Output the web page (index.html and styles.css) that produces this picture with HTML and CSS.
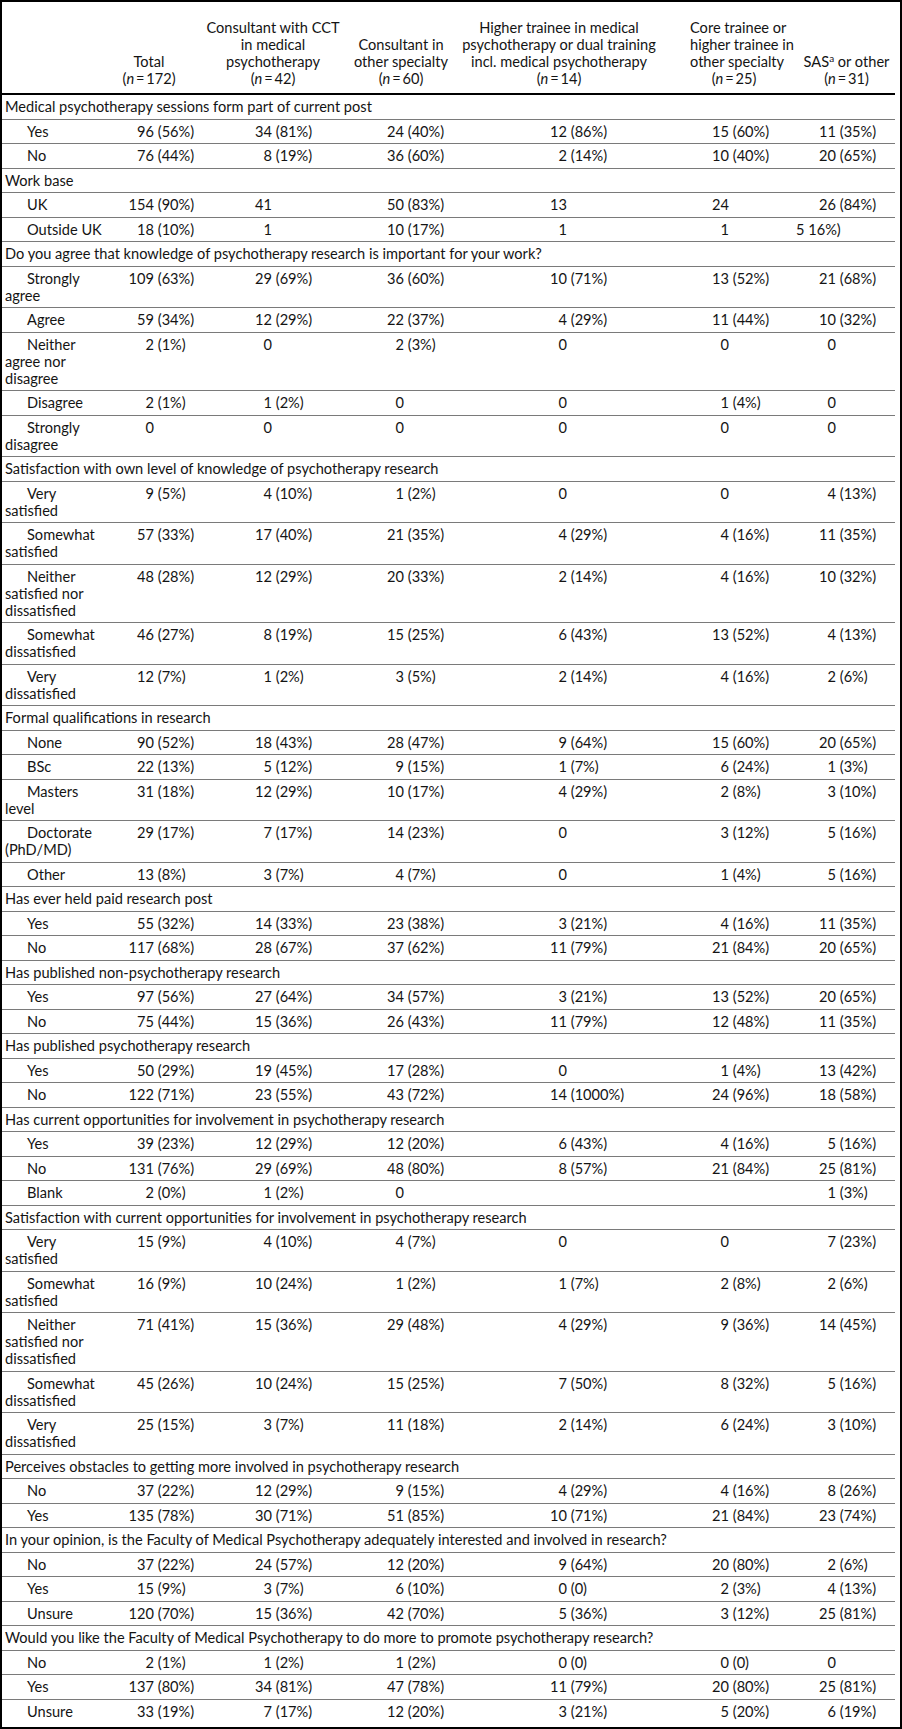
FILE: index.html
```html
<!DOCTYPE html>
<html lang="en">
<head>
<meta charset="utf-8">
<title>Survey table</title>
<link rel="stylesheet" href="styles.css">
</head>
<body>
<div class="frame">
<table class="tbl">
<colgroup>
<col class="w0"><col class="w1"><col class="w2"><col class="w3"><col class="w4"><col class="w5"><col class="w6">
</colgroup>
<thead>
<tr>
<th></th>
<th>Total<br>(<i>n</i>&thinsp;=&thinsp;172)</th>
<th>Consultant with CCT<br>in medical<br>psychotherapy<br>(<i>n</i>&thinsp;=&thinsp;42)</th>
<th>Consultant in<br>other specialty<br>(<i>n</i>&thinsp;=&thinsp;60)</th>
<th>Higher trainee in medical<br>psychotherapy or dual training<br>incl. medical psychotherapy<br>(<i>n</i>&thinsp;=&thinsp;14)</th>
<th>Core trainee or<br>higher trainee in<br>other specialty<br>(<i>n</i>&thinsp;=&thinsp;25)</th>
<th>SAS<sup>a</sup> or other<br>(<i>n</i>&thinsp;=&thinsp;31)</th>
</tr>
</thead>
<tbody>
<tr><td class="s" colspan="7">Medical psychotherapy sessions form part of current post</td></tr>
<tr><td class="l">Yes</td><td><span class="c">96</span> (56%)</td><td><span class="c">34</span> (81%)</td><td><span class="c">24</span> (40%)</td><td><span class="c">12</span> (86%)</td><td><span class="c">15</span> (60%)</td><td><span class="c">11</span> (35%)</td></tr>
<tr><td class="l">No</td><td><span class="c">76</span> (44%)</td><td><span class="c">8</span> (19%)</td><td><span class="c">36</span> (60%)</td><td><span class="c">2</span> (14%)</td><td><span class="c">10</span> (40%)</td><td><span class="c">20</span> (65%)</td></tr>

<tr><td class="s" colspan="7">Work base</td></tr>
<tr><td class="l">UK</td><td><span class="c">154</span> (90%)</td><td><span class="c">41</span></td><td><span class="c">50</span> (83%)</td><td><span class="c">13</span></td><td><span class="c">24</span></td><td><span class="c">26</span> (84%)</td></tr>
<tr><td class="l">Outside UK</td><td><span class="c">18</span> (10%)</td><td><span class="c">1</span></td><td><span class="c">10</span> (17%)</td><td><span class="c">1</span></td><td><span class="c">1</span></td><td class="odd">5 16%)</td></tr>

<tr><td class="s" colspan="7">Do you agree that knowledge of psychotherapy research is important for your work?</td></tr>
<tr><td class="l">Strongly<br>agree</td><td><span class="c">109</span> (63%)</td><td><span class="c">29</span> (69%)</td><td><span class="c">36</span> (60%)</td><td><span class="c">10</span> (71%)</td><td><span class="c">13</span> (52%)</td><td><span class="c">21</span> (68%)</td></tr>
<tr><td class="l">Agree</td><td><span class="c">59</span> (34%)</td><td><span class="c">12</span> (29%)</td><td><span class="c">22</span> (37%)</td><td><span class="c">4</span> (29%)</td><td><span class="c">11</span> (44%)</td><td><span class="c">10</span> (32%)</td></tr>
<tr><td class="l">Neither<br>agree nor<br>disagree</td><td><span class="c">2</span> (1%)</td><td><span class="c">0</span></td><td><span class="c">2</span> (3%)</td><td><span class="c">0</span></td><td><span class="c">0</span></td><td><span class="c">0</span></td></tr>
<tr><td class="l">Disagree</td><td><span class="c">2</span> (1%)</td><td><span class="c">1</span> (2%)</td><td><span class="c">0</span></td><td><span class="c">0</span></td><td><span class="c">1</span> (4%)</td><td><span class="c">0</span></td></tr>
<tr><td class="l">Strongly<br>disagree</td><td><span class="c">0</span></td><td><span class="c">0</span></td><td><span class="c">0</span></td><td><span class="c">0</span></td><td><span class="c">0</span></td><td><span class="c">0</span></td></tr>

<tr><td class="s" colspan="7">Satisfaction with own level of knowledge of psychotherapy research</td></tr>
<tr><td class="l">Very<br>satisfied</td><td><span class="c">9</span> (5%)</td><td><span class="c">4</span> (10%)</td><td><span class="c">1</span> (2%)</td><td><span class="c">0</span></td><td><span class="c">0</span></td><td><span class="c">4</span> (13%)</td></tr>
<tr><td class="l">Somewhat<br>satisfied</td><td><span class="c">57</span> (33%)</td><td><span class="c">17</span> (40%)</td><td><span class="c">21</span> (35%)</td><td><span class="c">4</span> (29%)</td><td><span class="c">4</span> (16%)</td><td><span class="c">11</span> (35%)</td></tr>
<tr><td class="l">Neither<br>satisfied nor<br>dissatisfied</td><td><span class="c">48</span> (28%)</td><td><span class="c">12</span> (29%)</td><td><span class="c">20</span> (33%)</td><td><span class="c">2</span> (14%)</td><td><span class="c">4</span> (16%)</td><td><span class="c">10</span> (32%)</td></tr>
<tr><td class="l">Somewhat<br>dissatisfied</td><td><span class="c">46</span> (27%)</td><td><span class="c">8</span> (19%)</td><td><span class="c">15</span> (25%)</td><td><span class="c">6</span> (43%)</td><td><span class="c">13</span> (52%)</td><td><span class="c">4</span> (13%)</td></tr>
<tr><td class="l">Very<br>dissatisfied</td><td><span class="c">12</span> (7%)</td><td><span class="c">1</span> (2%)</td><td><span class="c">3</span> (5%)</td><td><span class="c">2</span> (14%)</td><td><span class="c">4</span> (16%)</td><td><span class="c">2</span> (6%)</td></tr>

<tr><td class="s" colspan="7">Formal qualifications in research</td></tr>
<tr><td class="l">None</td><td><span class="c">90</span> (52%)</td><td><span class="c">18</span> (43%)</td><td><span class="c">28</span> (47%)</td><td><span class="c">9</span> (64%)</td><td><span class="c">15</span> (60%)</td><td><span class="c">20</span> (65%)</td></tr>
<tr><td class="l">BSc</td><td><span class="c">22</span> (13%)</td><td><span class="c">5</span> (12%)</td><td><span class="c">9</span> (15%)</td><td><span class="c">1</span> (7%)</td><td><span class="c">6</span> (24%)</td><td><span class="c">1</span> (3%)</td></tr>
<tr><td class="l">Masters<br>level</td><td><span class="c">31</span> (18%)</td><td><span class="c">12</span> (29%)</td><td><span class="c">10</span> (17%)</td><td><span class="c">4</span> (29%)</td><td><span class="c">2</span> (8%)</td><td><span class="c">3</span> (10%)</td></tr>
<tr><td class="l">Doctorate<br>(PhD/MD)</td><td><span class="c">29</span> (17%)</td><td><span class="c">7</span> (17%)</td><td><span class="c">14</span> (23%)</td><td><span class="c">0</span></td><td><span class="c">3</span> (12%)</td><td><span class="c">5</span> (16%)</td></tr>
<tr><td class="l">Other</td><td><span class="c">13</span> (8%)</td><td><span class="c">3</span> (7%)</td><td><span class="c">4</span> (7%)</td><td><span class="c">0</span></td><td><span class="c">1</span> (4%)</td><td><span class="c">5</span> (16%)</td></tr>

<tr><td class="s" colspan="7">Has ever held paid research post</td></tr>
<tr><td class="l">Yes</td><td><span class="c">55</span> (32%)</td><td><span class="c">14</span> (33%)</td><td><span class="c">23</span> (38%)</td><td><span class="c">3</span> (21%)</td><td><span class="c">4</span> (16%)</td><td><span class="c">11</span> (35%)</td></tr>
<tr><td class="l">No</td><td><span class="c">117</span> (68%)</td><td><span class="c">28</span> (67%)</td><td><span class="c">37</span> (62%)</td><td><span class="c">11</span> (79%)</td><td><span class="c">21</span> (84%)</td><td><span class="c">20</span> (65%)</td></tr>

<tr><td class="s" colspan="7">Has published non-psychotherapy research</td></tr>
<tr><td class="l">Yes</td><td><span class="c">97</span> (56%)</td><td><span class="c">27</span> (64%)</td><td><span class="c">34</span> (57%)</td><td><span class="c">3</span> (21%)</td><td><span class="c">13</span> (52%)</td><td><span class="c">20</span> (65%)</td></tr>
<tr><td class="l">No</td><td><span class="c">75</span> (44%)</td><td><span class="c">15</span> (36%)</td><td><span class="c">26</span> (43%)</td><td><span class="c">11</span> (79%)</td><td><span class="c">12</span> (48%)</td><td><span class="c">11</span> (35%)</td></tr>

<tr><td class="s" colspan="7">Has published psychotherapy research</td></tr>
<tr><td class="l">Yes</td><td><span class="c">50</span> (29%)</td><td><span class="c">19</span> (45%)</td><td><span class="c">17</span> (28%)</td><td><span class="c">0</span></td><td><span class="c">1</span> (4%)</td><td><span class="c">13</span> (42%)</td></tr>
<tr><td class="l">No</td><td><span class="c">122</span> (71%)</td><td><span class="c">23</span> (55%)</td><td><span class="c">43</span> (72%)</td><td><span class="c">14</span> (1000%)</td><td><span class="c">24</span> (96%)</td><td><span class="c">18</span> (58%)</td></tr>

<tr><td class="s" colspan="7">Has current opportunities for involvement in psychotherapy research</td></tr>
<tr><td class="l">Yes</td><td><span class="c">39</span> (23%)</td><td><span class="c">12</span> (29%)</td><td><span class="c">12</span> (20%)</td><td><span class="c">6</span> (43%)</td><td><span class="c">4</span> (16%)</td><td><span class="c">5</span> (16%)</td></tr>
<tr><td class="l">No</td><td><span class="c">131</span> (76%)</td><td><span class="c">29</span> (69%)</td><td><span class="c">48</span> (80%)</td><td><span class="c">8</span> (57%)</td><td><span class="c">21</span> (84%)</td><td><span class="c">25</span> (81%)</td></tr>
<tr><td class="l">Blank</td><td><span class="c">2</span> (0%)</td><td><span class="c">1</span> (2%)</td><td><span class="c">0</span></td><td></td><td></td><td><span class="c">1</span> (3%)</td></tr>

<tr><td class="s" colspan="7">Satisfaction with current opportunities for involvement in psychotherapy research</td></tr>
<tr><td class="l">Very<br>satisfied</td><td><span class="c">15</span> (9%)</td><td><span class="c">4</span> (10%)</td><td><span class="c">4</span> (7%)</td><td><span class="c">0</span></td><td><span class="c">0</span></td><td><span class="c">7</span> (23%)</td></tr>
<tr><td class="l">Somewhat<br>satisfied</td><td><span class="c">16</span> (9%)</td><td><span class="c">10</span> (24%)</td><td><span class="c">1</span> (2%)</td><td><span class="c">1</span> (7%)</td><td><span class="c">2</span> (8%)</td><td><span class="c">2</span> (6%)</td></tr>
<tr><td class="l">Neither<br>satisfied nor<br>dissatisfied</td><td><span class="c">71</span> (41%)</td><td><span class="c">15</span> (36%)</td><td><span class="c">29</span> (48%)</td><td><span class="c">4</span> (29%)</td><td><span class="c">9</span> (36%)</td><td><span class="c">14</span> (45%)</td></tr>
<tr><td class="l">Somewhat<br>dissatisfied</td><td><span class="c">45</span> (26%)</td><td><span class="c">10</span> (24%)</td><td><span class="c">15</span> (25%)</td><td><span class="c">7</span> (50%)</td><td><span class="c">8</span> (32%)</td><td><span class="c">5</span> (16%)</td></tr>
<tr><td class="l">Very<br>dissatisfied</td><td><span class="c">25</span> (15%)</td><td><span class="c">3</span> (7%)</td><td><span class="c">11</span> (18%)</td><td><span class="c">2</span> (14%)</td><td><span class="c">6</span> (24%)</td><td><span class="c">3</span> (10%)</td></tr>

<tr><td class="s" colspan="7">Perceives obstacles to getting more involved in psychotherapy research</td></tr>
<tr><td class="l">No</td><td><span class="c">37</span> (22%)</td><td><span class="c">12</span> (29%)</td><td><span class="c">9</span> (15%)</td><td><span class="c">4</span> (29%)</td><td><span class="c">4</span> (16%)</td><td><span class="c">8</span> (26%)</td></tr>
<tr><td class="l">Yes</td><td><span class="c">135</span> (78%)</td><td><span class="c">30</span> (71%)</td><td><span class="c">51</span> (85%)</td><td><span class="c">10</span> (71%)</td><td><span class="c">21</span> (84%)</td><td><span class="c">23</span> (74%)</td></tr>

<tr><td class="s" colspan="7">In your opinion, is the Faculty of Medical Psychotherapy adequately interested and involved in research?</td></tr>
<tr><td class="l">No</td><td><span class="c">37</span> (22%)</td><td><span class="c">24</span> (57%)</td><td><span class="c">12</span> (20%)</td><td><span class="c">9</span> (64%)</td><td><span class="c">20</span> (80%)</td><td><span class="c">2</span> (6%)</td></tr>
<tr><td class="l">Yes</td><td><span class="c">15</span> (9%)</td><td><span class="c">3</span> (7%)</td><td><span class="c">6</span> (10%)</td><td><span class="c">0</span> (0)</td><td><span class="c">2</span> (3%)</td><td><span class="c">4</span> (13%)</td></tr>
<tr><td class="l">Unsure</td><td><span class="c">120</span> (70%)</td><td><span class="c">15</span> (36%)</td><td><span class="c">42</span> (70%)</td><td><span class="c">5</span> (36%)</td><td><span class="c">3</span> (12%)</td><td><span class="c">25</span> (81%)</td></tr>

<tr><td class="s" colspan="7">Would you like the Faculty of Medical Psychotherapy to do more to promote psychotherapy research?</td></tr>
<tr><td class="l">No</td><td><span class="c">2</span> (1%)</td><td><span class="c">1</span> (2%)</td><td><span class="c">1</span> (2%)</td><td><span class="c">0</span> (0)</td><td><span class="c">0</span> (0)</td><td><span class="c">0</span></td></tr>
<tr><td class="l">Yes</td><td><span class="c">137</span> (80%)</td><td><span class="c">34</span> (81%)</td><td><span class="c">47</span> (78%)</td><td><span class="c">11</span> (79%)</td><td><span class="c">20</span> (80%)</td><td><span class="c">25</span> (81%)</td></tr>
<tr class="last"><td class="l">Unsure</td><td><span class="c">33</span> (19%)</td><td><span class="c">7</span> (17%)</td><td><span class="c">12</span> (20%)</td><td><span class="c">3</span> (21%)</td><td><span class="c">5</span> (20%)</td><td><span class="c">6</span> (19%)</td></tr>
</tbody>
</table>
</div>
</body>
</html>
```

FILE: styles.css
```css
html, body {
  margin: 0;
  padding: 0;
  background: #fff;
}

body {
  font-family: Lato, "Liberation Sans", sans-serif;
  font-size: 14.6px;
  color: #141414;
}

.frame {
  width: 898px;
  height: 1725px;
  border: 2px solid #000;
  overflow: hidden;
}

.tbl {
  border-collapse: collapse;
  table-layout: fixed;
  width: 893px;
}

.w0 { width: 106px; }
.w1 { width: 98px; }
.w2 { width: 134px; }
.w3 { width: 122px; }
.w4 { width: 206px; }
.w5 { width: 110px; }
.w6 { width: 117px; }

.tbl th {
  font-weight: normal;
  text-align: center;
  vertical-align: bottom;
  line-height: 17px;
  height: 85px;
  padding: 0 0 6px;
  white-space: nowrap;
}

.tbl th:nth-child(2) { padding-right: 16px; }
.tbl th:nth-child(5) { padding-right: 12px; }
.tbl th:nth-child(6) { padding-left: 22px; }
.tbl th:nth-child(7) { padding-left: 20px; }

.tbl sup {
  font-size: 10px;
  line-height: 0;
  vertical-align: 5px;
}

.tbl thead tr {
  border-bottom: 2px solid #000;
}

.tbl td {
  line-height: 17px;
  padding: 3px 0 3.5px;
  vertical-align: top;
  white-space: nowrap;
  font-variant-numeric: tabular-nums;
}

.tbl tbody tr {
  border-bottom: 1px solid #7a7a7a;
}

.tbl tbody tr.last {
  border-bottom: none;
}

.tbl td.s {
  padding-left: 3px;
}

.tbl td.l {
  padding-left: 3px;
  text-indent: 22px;
}

.c {
  display: inline-block;
  width: 26px;
  text-align: right;
  text-indent: 0;
}

.tbl td:nth-child(2) { padding-left: 20px; }
.tbl td:nth-child(3) { padding-left: 40px; }
.tbl td:nth-child(4) { padding-left: 38px; }
.tbl td:nth-child(5) { padding-left: 79px; }
.tbl td:nth-child(6) { padding-left: 35px; }
.tbl td:nth-child(7) { padding-left: 32px; }
.tbl td.odd { padding-left: 18px; }
```
